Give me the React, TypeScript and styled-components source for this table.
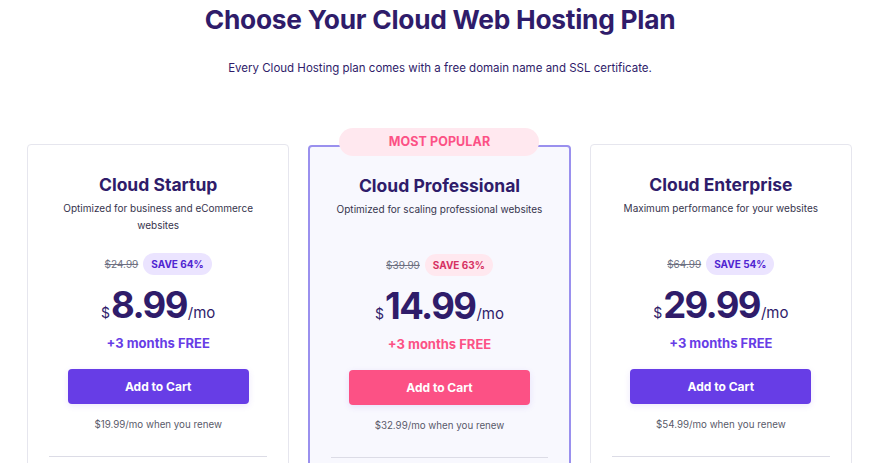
import React from "react";
import styled, { createGlobalStyle } from "styled-components";

type Plan = {
  name: string;
  desc: string;
  oldPrice: string;
  save: string;
  price: string;
  renew: string;
  popular?: boolean;
};

const plans: Plan[] = [
  {
    name: "Cloud Startup",
    desc: "Optimized for business and eCommerce websites",
    oldPrice: "$24.99",
    save: "SAVE 64%",
    price: "8.99",
    renew: "$19.99/mo when you renew",
  },
  {
    name: "Cloud Professional",
    desc: "Optimized for scaling professional websites",
    oldPrice: "$39.99",
    save: "SAVE 63%",
    price: "14.99",
    renew: "$32.99/mo when you renew",
    popular: true,
  },
  {
    name: "Cloud Enterprise",
    desc: "Maximum performance for your websites",
    oldPrice: "$64.99",
    save: "SAVE 54%",
    price: "29.99",
    renew: "$54.99/mo when you renew",
  },
];

const GlobalStyle = createGlobalStyle`
  * { box-sizing: border-box; }
  body {
    margin: 0;
    background: #ffffff;
    font-family: Inter, "Noto Sans", Arial, sans-serif;
    color: #2f1c6a;
    overflow: hidden;
  }
`;

const Page = styled.div`
  width: 880px;
  height: 463px;
  padding-top: 2px;
  display: flex;
  flex-direction: column;
  align-items: center;
`;

const Title = styled.h1`
  margin: 0;
  font-size: 26.3px;
  line-height: 36px;
  font-weight: 700;
  color: #2f1c6a;
  letter-spacing: -0.25px;
`;

const Subtitle = styled.p`
  margin: 21px 0 0;
  font-size: 11.5px;
  line-height: 18px;
  color: #2f1c6a;
`;

const Grid = styled.div`
  margin-top: 67px;
  margin-right: 1px;
  width: 825px;
  display: grid;
  grid-template-columns: repeat(3, 1fr);
  gap: 19px;
  align-items: start;
`;

const Card = styled.div<{ $popular?: boolean }>`
  position: relative;
  height: 340px;
  padding: 28px 21px 0;
  display: flex;
  flex-direction: column;
  align-items: center;
  text-align: center;
  background: ${(p) => (p.$popular ? "#f8f8fe" : "#ffffff")};
  border: ${(p) => (p.$popular ? "2px solid #9a90ee" : "1px solid #e6e6ee")};
  border-radius: 4px;
  margin-top: ${(p) => (p.$popular ? "1px" : "0")};
  padding-top: ${(p) => (p.$popular ? "27px" : "28px")};
`;

const PopularBadge = styled.div`
  position: absolute;
  top: -19px;
  left: 50%;
  transform: translateX(-50%);
  width: 200px;
  height: 28px;
  border-radius: 14px;
  background: #ffe8ef;
  color: #fc5185;
  font-size: 12.5px;
  font-weight: 700;
  line-height: 28px;
  letter-spacing: 0.1px;
`;

const PlanName = styled.h2`
  margin: 0;
  font-size: 17.5px;
  line-height: 24px;
  font-weight: 700;
  color: #2f1c6a;
`;

const Desc = styled.p`
  margin: 3px 0 0;
  min-height: 34px;
  font-size: 10px;
  line-height: 17px;
  color: #36344d;
`;

const PriceRow = styled.div`
  margin-top: 19px;
  height: 22px;
  display: flex;
  align-items: center;
  gap: 5px;
`;

const OldPrice = styled.span`
  font-size: 10px;
  color: #6d7081;
  text-decoration: line-through;
`;

const Save = styled.span<{ $popular?: boolean }>`
  height: 22px;
  padding: 0 8px;
  border-radius: 11px;
  font-size: 10px;
  font-weight: 700;
  line-height: 22px;
  background: ${(p) => (p.$popular ? "#ffe8ef" : "#ebe4ff")};
  color: ${(p) => (p.$popular ? "#d63163" : "#5025d1")};
`;

const Price = styled.div`
  margin-top: 10px;
  height: 40px;
  display: flex;
  align-items: baseline;
  color: #2f1c6a;
`;

const Currency = styled.span`
  font-size: 14px;
  margin-right: 1px;
`;

const Amount = styled.span`
  font-size: 36.5px;
  line-height: 40px;
  font-weight: 700;
  letter-spacing: -1.6px;
`;

const PerMonth = styled.span`
  font-size: 15px;
  margin-left: 1px;
`;

const Free = styled.div<{ $popular?: boolean }>`
  margin-top: 8px;
  font-size: 13px;
  line-height: 20px;
  font-weight: 700;
  color: ${(p) => (p.$popular ? "#fc5185" : "#673de6")};
`;

const CartButton = styled.button<{ $popular?: boolean }>`
  margin-top: 16px;
  width: 181px;
  height: 35px;
  border: none;
  border-radius: 4px;
  font-family: inherit;
  font-size: 12px;
  font-weight: 700;
  color: #ffffff;
  background: ${(p) => (p.$popular ? "#fc5185" : "#673de6")};
  box-shadow: 0 2px 6px rgba(103, 61, 230, 0.12);
  cursor: pointer;
`;

const Renew = styled.p`
  margin: 13px 0 0;
  font-size: 9.75px;
  line-height: 16px;
  color: #595a6a;
`;

const Divider = styled.hr`
  margin: 23px 0 0;
  width: 100%;
  border: none;
  border-top: 1px solid #dcdce6;
`;

export default function App() {
  return (
    <>
      <GlobalStyle />
      <Page>
        <Title>Choose Your Cloud Web Hosting Plan</Title>
        <Subtitle>
          Every Cloud Hosting plan comes with a free domain name and SSL certificate.
        </Subtitle>
        <Grid>
          {plans.map((plan) => (
            <Card key={plan.name} $popular={plan.popular}>
              {plan.popular && <PopularBadge>MOST POPULAR</PopularBadge>}
              <PlanName>{plan.name}</PlanName>
              <Desc>{plan.desc}</Desc>
              <PriceRow>
                <OldPrice>{plan.oldPrice}</OldPrice>
                <Save $popular={plan.popular}>{plan.save}</Save>
              </PriceRow>
              <Price>
                <Currency>$</Currency>
                <Amount>{plan.price}</Amount>
                <PerMonth>/mo</PerMonth>
              </Price>
              <Free $popular={plan.popular}>+3 months FREE</Free>
              <CartButton $popular={plan.popular}>Add to Cart</CartButton>
              <Renew>{plan.renew}</Renew>
              <Divider />
            </Card>
          ))}
        </Grid>
      </Page>
    </>
  );
}
